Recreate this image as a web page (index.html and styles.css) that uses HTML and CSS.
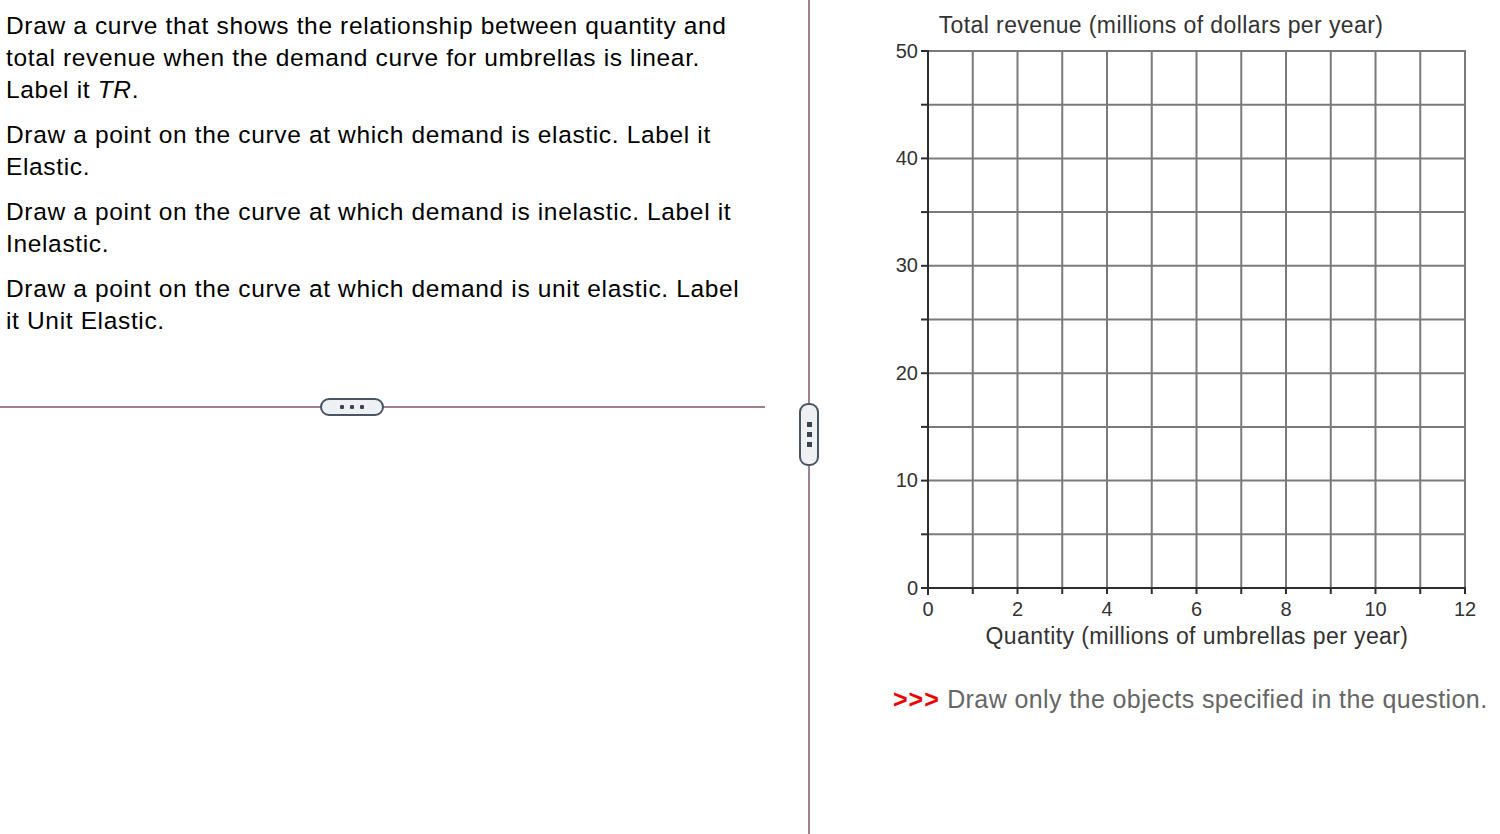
FILE: index.html
```html
<!DOCTYPE html>
<html>
<head>
<meta charset="utf-8">
<link rel="stylesheet" href="styles.css">
</head>
<body>
<div class="page">
  <div class="left">
    <div class="question">
      <p>Draw a curve that shows the relationship between quantity and total revenue when the demand curve for umbrellas is linear. Label it <i>TR</i>.</p>
      <p>Draw a point on the curve at which demand is elastic. Label it Elastic.</p>
      <p>Draw a point on the curve at which demand is inelastic. Label it Inelastic.</p>
      <p>Draw a point on the curve at which demand is unit elastic. Label it Unit Elastic.</p>
    </div>
    <div class="hdivider">
      <div class="hbtn"><span class="dot"></span><span class="dot"></span><span class="dot"></span></div>
    </div>
  </div>
  <div class="vdivider">
    <div class="vbtn"><span class="sq"></span><span class="sq"></span><span class="sq"></span></div>
  </div>
  <div class="right">
    <svg class="chart" width="690" height="660" viewBox="810 0 690 660" xmlns="http://www.w3.org/2000/svg">
      <g class="grid" stroke="#7a7a7a" stroke-width="2">
        <line x1="972.75" y1="51" x2="972.75" y2="588"/>
        <line x1="1017.5" y1="51" x2="1017.5" y2="588"/>
        <line x1="1062.25" y1="51" x2="1062.25" y2="588"/>
        <line x1="1107" y1="51" x2="1107" y2="588"/>
        <line x1="1151.75" y1="51" x2="1151.75" y2="588"/>
        <line x1="1196.5" y1="51" x2="1196.5" y2="588"/>
        <line x1="1241.25" y1="51" x2="1241.25" y2="588"/>
        <line x1="1286" y1="51" x2="1286" y2="588"/>
        <line x1="1330.75" y1="51" x2="1330.75" y2="588"/>
        <line x1="1375.5" y1="51" x2="1375.5" y2="588"/>
        <line x1="1420.25" y1="51" x2="1420.25" y2="588"/>
        <line x1="1465" y1="50" x2="1465" y2="588"/>
        <line x1="928" y1="51" x2="1466" y2="51"/>
        <line x1="928" y1="104.7" x2="1465" y2="104.7"/>
        <line x1="928" y1="158.4" x2="1465" y2="158.4"/>
        <line x1="928" y1="212.1" x2="1465" y2="212.1"/>
        <line x1="928" y1="265.8" x2="1465" y2="265.8"/>
        <line x1="928" y1="319.5" x2="1465" y2="319.5"/>
        <line x1="928" y1="373.2" x2="1465" y2="373.2"/>
        <line x1="928" y1="426.9" x2="1465" y2="426.9"/>
        <line x1="928" y1="480.6" x2="1465" y2="480.6"/>
        <line x1="928" y1="534.3" x2="1465" y2="534.3"/>
      </g>
      <g class="axes" stroke="#2e2e2e" stroke-width="2">
        <line x1="928" y1="50" x2="928" y2="595"/>
        <line x1="927" y1="588" x2="1466" y2="588"/>
        <line x1="921" y1="51" x2="928" y2="51"/>
        <line x1="921" y1="104.7" x2="928" y2="104.7"/>
        <line x1="921" y1="158.4" x2="928" y2="158.4"/>
        <line x1="921" y1="212.1" x2="928" y2="212.1"/>
        <line x1="921" y1="265.8" x2="928" y2="265.8"/>
        <line x1="921" y1="319.5" x2="928" y2="319.5"/>
        <line x1="921" y1="373.2" x2="928" y2="373.2"/>
        <line x1="921" y1="426.9" x2="928" y2="426.9"/>
        <line x1="921" y1="480.6" x2="928" y2="480.6"/>
        <line x1="921" y1="534.3" x2="928" y2="534.3"/>
        <line x1="921" y1="588" x2="928" y2="588"/>
        <line x1="972.75" y1="588" x2="972.75" y2="594"/>
        <line x1="1017.5" y1="588" x2="1017.5" y2="594"/>
        <line x1="1062.25" y1="588" x2="1062.25" y2="594"/>
        <line x1="1107" y1="588" x2="1107" y2="594"/>
        <line x1="1151.75" y1="588" x2="1151.75" y2="594"/>
        <line x1="1196.5" y1="588" x2="1196.5" y2="594"/>
        <line x1="1241.25" y1="588" x2="1241.25" y2="594"/>
        <line x1="1286" y1="588" x2="1286" y2="594"/>
        <line x1="1330.75" y1="588" x2="1330.75" y2="594"/>
        <line x1="1375.5" y1="588" x2="1375.5" y2="594"/>
        <line x1="1420.25" y1="588" x2="1420.25" y2="594"/>
        <line x1="1465" y1="588" x2="1465" y2="594"/>
      </g>
      <g class="ylabels">
        <text x="918" y="58">50</text>
        <text x="918" y="165">40</text>
        <text x="918" y="272">30</text>
        <text x="918" y="380">20</text>
        <text x="918" y="487">10</text>
        <text x="918" y="595">0</text>
      </g>
      <g class="xlabels">
        <text x="928" y="616">0</text>
        <text x="1017.5" y="616">2</text>
        <text x="1107" y="616">4</text>
        <text x="1196.5" y="616">6</text>
        <text x="1286" y="616">8</text>
        <text x="1375.5" y="616">10</text>
        <text x="1465" y="616">12</text>
      </g>
      <text class="title" x="1161" y="33">Total revenue (millions of dollars per year)</text>
      <text class="xtitle" x="1197" y="644">Quantity (millions of umbrellas per year)</text>
    </svg>
    <div class="note"><span class="arrows">&gt;&gt;&gt;</span> Draw only the objects specified in the question.</div>
  </div>
</div>
</body>
</html>
```

FILE: styles.css
```css
html, body {
  margin: 0;
  padding: 0;
  background: #ffffff;
}

.page {
  display: flex;
  width: 1500px;
  height: 834px;
  font-family: "Liberation Sans", Arial, sans-serif;
  overflow: hidden;
}

.left {
  width: 808px;
  flex: none;
  display: flex;
  flex-direction: column;
}

.question {
  height: 398px;
  padding: 10px 0 0 6px;
  box-sizing: border-box;
  width: 750px;
}

.question p {
  margin: 0 0 13px 0;
  font-size: 24.5px;
  letter-spacing: 0.65px;
  line-height: 32px;
  color: #000;
}

.hdivider {
  width: 765px;
  height: 18px;
  display: flex;
  align-items: center;
  position: relative;
}

.hdivider::before {
  content: "";
  position: absolute;
  left: 0;
  right: 0;
  top: 8px;
  height: 2px;
  background: #a3808f;
}

.hbtn {
  position: relative;
  width: 60px;
  height: 14px;
  margin-left: 320px;
  border: 2px solid #4a5563;
  border-radius: 9px;
  background: #eef0f4;
  display: flex;
  align-items: center;
  justify-content: center;
  gap: 6px;
}

.dot {
  width: 4px;
  height: 4px;
  border-radius: 1px;
  background: #3a4350;
}

.vdivider {
  width: 2px;
  flex: none;
  background: #a3808f;
  position: relative;
}

.vbtn {
  position: absolute;
  left: -9px;
  top: 403px;
  width: 16px;
  height: 59px;
  border: 2px solid #4a5563;
  border-radius: 9px;
  background: #eef0f4;
  display: flex;
  flex-direction: column;
  align-items: center;
  justify-content: center;
  gap: 5px;
}

.sq {
  width: 5px;
  height: 5px;
  background: #3a4350;
}

.right {
  flex: 1;
  display: flex;
  flex-direction: column;
}

.chart {
  display: block;
  font-family: "Liberation Sans", Arial, sans-serif;
}

.ylabels text {
  font-size: 20px;
  fill: #333;
  text-anchor: end;
}

.xlabels text {
  font-size: 20px;
  fill: #333;
  text-anchor: middle;
}

.title, .xtitle {
  font-size: 23px;
  letter-spacing: 0.4px;
  fill: #333;
  text-anchor: middle;
}

.note {
  margin: 25px 0 0 83px;
  font-size: 25px;
  letter-spacing: 0.4px;
  color: #666;
  white-space: nowrap;
}

.arrows {
  color: #ee0000;
  font-weight: bold;
  letter-spacing: 1px;
}
```
